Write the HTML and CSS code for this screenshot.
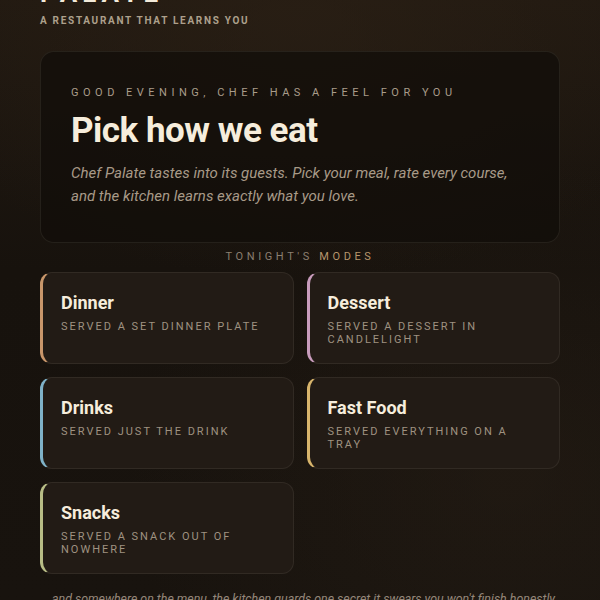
FILE: index.html
```html
<!DOCTYPE html>
<html lang="en">
<head>
<meta charset="utf-8">
<title>Palate</title>
<link rel="stylesheet" href="styles.css">
</head>
<body>
<div class="page">
  <header class="top">
    <div class="brand">
      <div class="logo">PALATE</div>
      <div class="tagline">A RESTAURANT THAT LEARNS YOU</div>
    </div>
    <div class="ways">5 WAYS TO DINE</div>
  </header>

  <section class="hero">
    <div class="eyebrow">GOOD EVENING, CHEF HAS A FEEL FOR YOU</div>
    <h1 class="title">Pick how we eat</h1>
    <p class="lede">Chef Palate tastes into its guests. Pick your meal, rate every course, and the kitchen learns exactly what you love.</p>
  </section>

  <div class="modes-label">TONIGHT'S <span class="gold">MODES</span></div>

  <div class="grid">
    <div class="card dinner">
      <div class="card-title">Dinner</div>
      <div class="card-sub">SERVED A SET DINNER PLATE</div>
    </div>
    <div class="card dessert">
      <div class="card-title">Dessert</div>
      <div class="card-sub">SERVED A DESSERT IN CANDLELIGHT</div>
    </div>
    <div class="card drinks">
      <div class="card-title">Drinks</div>
      <div class="card-sub">SERVED JUST THE DRINK</div>
    </div>
    <div class="card fast">
      <div class="card-title">Fast Food</div>
      <div class="card-sub">SERVED EVERYTHING ON A TRAY</div>
    </div>
    <div class="card snacks">
      <div class="card-title">Snacks</div>
      <div class="card-sub">SERVED A SNACK OUT OF NOWHERE</div>
    </div>
  </div>

  <p class="footnote">...and somewhere on the menu, the kitchen guards one secret it swears you won't finish honestly.</p>
</div>
</body>
</html>
```

FILE: styles.css
```css
html, body {
  margin: 0;
  padding: 0;
}
body {
  width: 600px;
  height: 600px;
  overflow: hidden;
  font-family: Roboto, "Liberation Sans", sans-serif;
  background:
    radial-gradient(ellipse 420px 260px at 50% 20px, rgba(46, 34, 22, 0.55), rgba(46, 34, 22, 0) 100%),
    radial-gradient(ellipse 380px 320px at 85% 80%, rgba(40, 31, 22, 0.5), rgba(40, 31, 22, 0) 100%),
    linear-gradient(180deg, #211911 0%, #17120d 45%, #18130e 100%);
  color: #f3ead9;
}
.page {
  margin-top: -24px;
  padding: 0 40px;
  display: flex;
  flex-direction: column;
}
.top {
  display: flex;
  justify-content: space-between;
  align-items: flex-start;
}
.logo {
  font-size: 26px;
  font-weight: 700;
  letter-spacing: 5px;
  line-height: 34px;
  color: #f3ead9;
}
.tagline {
  margin-top: 5px;
  font-size: 10px;
  font-weight: 700;
  letter-spacing: 1.7px;
  color: #ada08c;
}
.ways {
  margin-top: 12px;
  font-size: 11px;
  font-weight: 500;
  letter-spacing: 2.4px;
  color: #c39a62;
}
.hero {
  margin-top: 25px;
  background: rgba(18, 14, 10, 0.75);
  border: 1px solid rgba(255, 240, 220, 0.08);
  border-radius: 14px;
  padding: 34px 30px 34px;
}
.eyebrow {
  font-size: 11px;
  letter-spacing: 4.5px;
  color: #a99c8a;
}
.title {
  margin: 11px 0 0;
  font-size: 35px;
  font-weight: 700;
  letter-spacing: -0.5px;
  line-height: 42px;
  color: #f6eddc;
}
.lede {
  margin: 10px 0 0;
  font-size: 15px;
  font-style: italic;
  line-height: 23px;
  color: #a89a88;
}
.modes-label {
  margin-top: 7px;
  text-align: center;
  font-size: 11px;
  letter-spacing: 3.6px;
  color: #8b7f70;
}
.gold {
  color: #b7966c;
}
.grid {
  margin-top: 9px;
  display: grid;
  grid-template-columns: 1fr 1fr;
  gap: 13px;
}
.card {
  height: 92px;
  box-sizing: border-box;
  background: #221b15;
  border: 1px solid rgba(255, 240, 220, 0.07);
  border-left: 3px solid #c8966a;
  border-radius: 12px;
  padding: 19px 10px 0 18px;
}
.dinner { border-left-color: #c8966a; }
.dessert { border-left-color: #c89cbc; }
.drinks { border-left-color: #7fb2c8; }
.fast { border-left-color: #d8b56c; }
.snacks { border-left-color: #b8bd86; }
.card-title {
  font-size: 18px;
  font-weight: 700;
  line-height: 22px;
  color: #f6eddc;
}
.card-sub {
  margin-top: 6px;
  font-size: 11px;
  letter-spacing: 2px;
  line-height: 13px;
  color: #9f9281;
  max-width: 206px;
}
.footnote {
  margin: 17px -20px 0;
  text-align: center;
  font-size: 12.4px;
  font-style: italic;
  color: #95877a;
  white-space: nowrap;
}
```
